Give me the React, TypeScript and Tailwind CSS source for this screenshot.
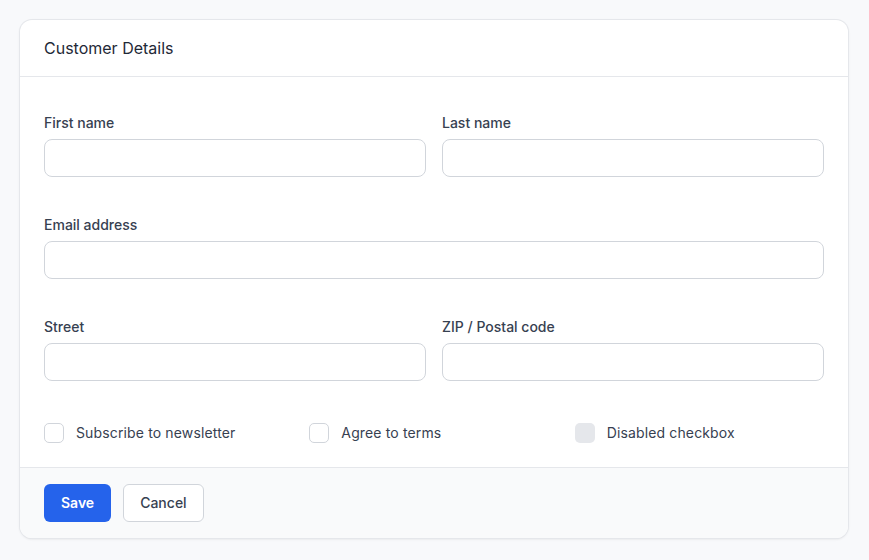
import { useState } from 'react';

const Field = ({ label, type = 'text' }: { label: string; type?: string }) => (
  <div className="flex flex-col">
    <label className="text-sm font-medium leading-5 text-[#374151] mb-1.5">{label}</label>
    <input
      type={type}
      className="h-[38px] w-full rounded-lg border border-[#d1d5db] bg-white px-3 text-sm text-[#111827] outline-none focus:border-[#2563eb]"
    />
  </div>
);

const Check = ({ label, disabled = false }: { label: string; disabled?: boolean }) => {
  const [on, setOn] = useState(false);
  return (
    <label className="flex items-center gap-3 text-sm leading-5 tracking-[0.01em] text-[#374151]">
      <button
        type="button"
        disabled={disabled}
        onClick={() => setOn(!on)}
        className={
          disabled
            ? 'h-5 w-5 rounded-[5px] bg-[#e5e7eb]'
            : on
              ? 'h-5 w-5 rounded-[5px] border border-[#2563eb] bg-[#2563eb]'
              : 'h-5 w-5 rounded-[5px] border border-[#d1d5db] bg-white'
        }
      />
      <span>{label}</span>
    </label>
  );
};

export default function App() {
  return (
    <div className="min-h-screen bg-[#f8f9fb] pt-5 pb-5 pl-5 pr-[21px] font-['Inter',sans-serif]">
      <div className="overflow-hidden rounded-xl bg-white shadow-sm ring-1 ring-[#e5e7eb]">
        {/* Header */}
        <div className="border-b border-[#e5e7eb] px-6 py-4">
          <h2 className="text-base leading-6 text-[#1f2937]">Customer Details</h2>
        </div>

        {/* Body */}
        <div className="px-6 pt-9 pb-6">
          <div className="grid grid-cols-2 gap-x-4 gap-y-[38px]">
            <Field label="First name" />
            <Field label="Last name" />
            <div className="col-span-2">
              <Field label="Email address" type="email" />
            </div>
            <Field label="Street" />
            <Field label="ZIP / Postal code" />
          </div>

          <div className="mt-[42px] grid grid-cols-3 gap-4">
            <Check label="Subscribe to newsletter" />
            <Check label="Agree to terms" />
            <Check label="Disabled checkbox" disabled />
          </div>
        </div>

        {/* Footer */}
        <div className="flex gap-3 border-t border-[#e5e7eb] bg-[#f9fafb] px-6 py-4">
          <button className="h-[38px] rounded-md bg-[#2563eb] px-[17px] text-sm font-semibold text-white">Save</button>
          <button className="h-[38px] rounded-md border border-[#d1d5db] bg-white px-4 text-sm font-medium text-[#374151]">
            Cancel
          </button>
        </div>
      </div>
    </div>
  );
}
